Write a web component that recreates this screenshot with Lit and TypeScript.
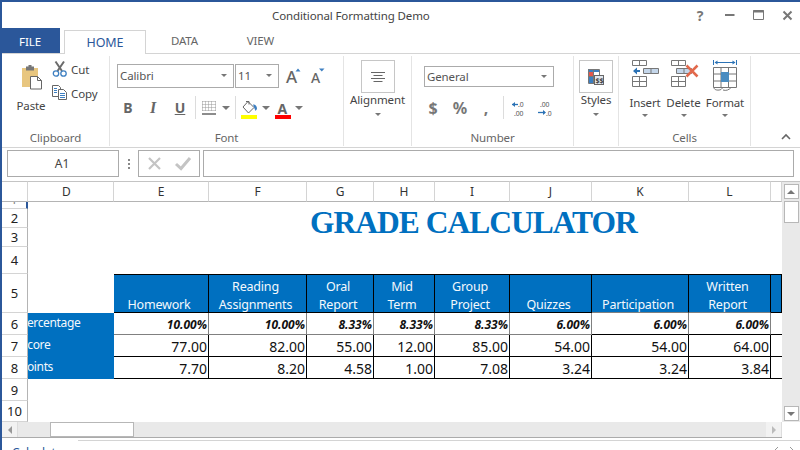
import { LitElement, html, css } from "lit";
import { customElement } from "lit/decorators.js";

const COLS = ["D", "E", "F", "G", "H", "I", "J", "K", "L", ""];
const HEADS = [
  ["Homework"], ["Reading", "Assignments"], ["Oral", "Report"], ["Mid", "Term"],
  ["Group", "Project"], ["Quizzes"], ["Participation"], ["Written", "Report"], [""],
];
const ROWS = [
  { label: "Percentage", cls: "pct", vals: ["10.00%", "10.00%", "8.33%", "8.33%", "8.33%", "6.00%", "6.00%", "6.00%", ""] },
  { label: "Score", cls: "num", vals: ["77.00", "82.00", "55.00", "12.00", "85.00", "54.00", "54.00", "64.00", ""] },
  { label: "Points", cls: "num", vals: ["7.70", "8.20", "4.58", "1.00", "7.08", "3.24", "3.24", "3.84", ""] },
];

const pasteIcon = html`<svg width="30" height="25" viewBox="0 0 30 25">
  <rect x="5" y="3" width="16" height="19" fill="#e8c67f"/>
  <rect x="9" y="1.5" width="8" height="4" fill="#777"/><rect x="11.5" y="0" width="3" height="2" fill="#777"/>
  <path d="M13.5 11.5h7l4 4v8.500h-11z" fill="#fff" stroke="#666"/><path d="M20.500 11.500v4h4" fill="none" stroke="#666"/>
</svg>`;
const cutIcon = html`<svg width="16" height="16" viewBox="0 0 16 16">
  <path d="M3.500 0.500 L10 10 M12 0.500 L5.500 10" stroke="#6b6b6b" stroke-width="2" fill="none"/>
  <circle cx="4" cy="12.500" r="2.700" fill="none" stroke="#3d7fc1" stroke-width="1.300"/>
  <circle cx="11.500" cy="12.500" r="2.700" fill="none" stroke="#3d7fc1" stroke-width="1.300"/>
</svg>`;
const copyIcon = html`<svg width="16" height="15" viewBox="0 0 16 15">
  <path d="M0.500 0.500h6l2 2v9h-8z" fill="#fff" stroke="#666"/>
  <path d="M6.500 4.500h5l3 3v7h-8z" fill="#fff" stroke="#666"/>
  <path d="M2 3.500h3M2 5.500h3M2 7.500h3M8 8.500h5M8 10.500h5M8 12.500h5" stroke="#3d7fc1"/>
</svg>`;
const growIcon = html`<svg width="14" height="16" viewBox="0 0 14 16">
  <text x="0" y="15" class="svgA" font-size="17">A</text><path d="M9.500 3.500l2.500-3 2.500 3z" fill="#3d7fc1"/>
</svg>`;
const shrinkIcon = html`<svg width="14" height="16" viewBox="0 0 14 16">
  <text x="0" y="15" class="svgA" font-size="14">A</text><path d="M8 0.500h5.500l-2.700 3z" fill="#3d7fc1"/>
</svg>`;
const borderIcon = html`<svg width="14" height="14" viewBox="0 0 14 14">
  <path d="M0.500 0.500h13M0.500 3.500h13M0.500 6.500h13M0.500 9.500h13M0.500 0.500v10M3.500 0.500v10M6.500 0.500v10M9.500 0.500v10M13.500 0.500v10" stroke="#999" stroke-dasharray="1 1" fill="none"/>
  <path d="M0 13h14" stroke="#666" stroke-width="1.500"/>
</svg>`;
const fillIcon = html`<svg width="17" height="18" viewBox="0 0 17 18">
  <path d="M7 0.500 L2 6 L7.500 12 L13 6.500 Z" fill="#fff" stroke="#666"/><path d="M5 0.500h3v3" fill="none" stroke="#666"/>
  <path d="M12 3.500c2.500 0 4 2 4 4.500l-1.500 2-1-2.500z" fill="#3d7fc1"/>
  <rect x="0" y="14" width="16" height="4" fill="#ffff00"/>
</svg>`;
const fontColorIcon = html`<svg width="16" height="18" viewBox="0 0 16 18">
  <text x="2.500" y="13" class="svgAB" font-size="14">A</text><rect x="0" y="14" width="16" height="4" fill="#f00"/>
</svg>`;
const alignIcon = html`<svg width="14" height="10" viewBox="0 0 14 10">
  <path d="M0 0.500h14M2.500 3.500h9M0 6.500h14M2.500 9.500h9" stroke="#666"/>
</svg>`;
const stylesIcon = html`<svg width="16" height="16" viewBox="0 0 16 16">
  <rect x="0" y="0" width="11" height="3" fill="#3d7fc1"/><rect x="0" y="3" width="5" height="4" fill="#e2574c"/>
  <path d="M0.500 0.500h11v14h-11zM0.500 7.500h11M0.500 11h5M5.500 0.500v14" fill="none" stroke="#777"/>
  <rect x="1" y="8" width="4" height="6" fill="#3d7fc1"/>
  <rect x="6.500" y="6.500" width="9" height="9" fill="#dfe6ee" stroke="#666"/>
  <text x="7.500" y="14" font-size="7" font-weight="700" font-family="'Noto Sans',sans-serif" fill="#444">$$</text>
</svg>`;
const insertIcon = html`<svg width="27" height="27" viewBox="0 0 27 27">
  <path d="M0.500 0.500h14v5h-14zM7.500 0.500v5" fill="#fff" stroke="#777"/>
  <path d="M11.500 8.500h15v5h-15zM19 8.500v5" fill="#c4d6ea" stroke="#777"/>
  <path d="M1 11l4-3.500v2.500h3v2h-3v2.500z" fill="#2b72b5"/>
  <path d="M0.500 16.500h14v10h-14zM0.500 21.500h14M7.500 16.500v10" fill="#fff" stroke="#777"/>
</svg>`;
const deleteIcon = html`<svg width="29" height="27" viewBox="0 0 29 27">
  <path d="M0.500 0.500h14v5h-14zM7.500 0.500v5" fill="#fff" stroke="#777"/>
  <path d="M5.500 8.500h15v5h-15zM13 8.500v5" fill="#c4d6ea" stroke="#777"/>
  <path d="M0.500 16.500h14v10h-14zM0.500 21.500h14M7.500 16.500v10" fill="#fff" stroke="#777"/>
  <path d="M15.500 5.500l11 11M26.500 5.500l-11 11" stroke="#e2694c" stroke-width="2.500"/>
</svg>`;
const formatIcon = html`<svg width="24" height="31" viewBox="0 0 24 31">
  <path d="M0.500 0v5M23.500 0v5M2 2.500h20" stroke="#2b72b5" fill="none"/><path d="M1.500 2.500l3-2v4zM22.500 2.500l-3-2v4z" fill="#2b72b5"/>
  <path d="M0.500 7.500h23v20h-23zM0.500 14h23M0.500 21h23M8 7.500v20M15.500 7.500v20" fill="#fff" stroke="#777"/>
  <rect x="8" y="12" width="8" height="10" fill="#4a8cc0"/>
  <path d="M1 27.500c0 3 5 3 7 2l2-2M10 30c3 1 6 0 8-2.500" fill="none" stroke="#777"/>
</svg>`;
const decLeft = html`<svg width="16" height="16" viewBox="0 0 16 16">
  <text x="6" y="7" class="svgN">.0</text><text x="2" y="15.600" class="svgN">.00</text>
  <path d="M0 4.500h6" stroke="#2b72b5" stroke-width="1.300"/><path d="M0 4.500l3-2.500v5z" fill="#2b72b5"/>
</svg>`;
const decRight = html`<svg width="16" height="16" viewBox="0 0 16 16">
  <text x="2" y="7" class="svgN">.00</text><text x="8" y="15.600" class="svgN">.0</text>
  <path d="M0 12.500h7" stroke="#2b72b5" stroke-width="1.300"/><path d="M8 12.500l-3-2.500v5z" fill="#2b72b5"/>
</svg>`;

@customElement("app-root")
export class AppRoot extends LitElement {
  static styles = css`
    :host { display: block; width: 800px; height: 450px; overflow: hidden; background: #fff; box-sizing: border-box;
      border-top: 2px solid #2b579a; border-left: 2px solid #2b579a; font-family: "Noto Sans", sans-serif; color: #444; font-size: 11.500px; letter-spacing: -0.12px; }
    svg { display: block; flex: none; overflow: visible; }
    .svgA { font-family: "Noto Sans", sans-serif; fill: #666; font-weight: 500; }
    .svgAB { font-family: "Noto Sans", sans-serif; fill: #666; font-weight: 700; }
    .svgN { font-family: "Noto Sans", sans-serif; fill: #555; font-size: 6.800px; }
    .caret { width: 0; height: 0; border-left: 4px solid transparent; border-right: 4px solid transparent; border-top: 4px solid #777; flex: none; }
    .caret.sm { border-left-width: 3px; border-right-width: 3px; border-top-width: 3px; }

    .titlebar { height: 26px; display: flex; align-items: center; }
    .title { margin-left: 270px; color: #444; }
    .winctl { margin-left: auto; display: flex; align-items: center; }
    .help { width: 16px; text-align: center; font-weight: 700; font-size: 14px; color: #777; margin-right: 17px; }
    .wm { margin-right: 18px; }
    .wx { margin-right: 19px; }
    .wc { margin-right: 8px; }

    .tabs { height: 26px; display: flex; box-sizing: border-box; border-bottom: 1px solid #d4d4d4; margin-left: -2px; }
    .tab { display: flex; align-items: center; justify-content: center; color: #666; height: 25px; padding-bottom: 1px; box-sizing: border-box; }
    .file { width: 60px; background: #2b579a; color: #fff; padding: 2px 0 0; }
    .home { width: 82px; margin-left: 4px; margin-top: 2px; padding: 0; border: 1px solid #d4d4d4; border-bottom: 0; background: #fff; color: #2b579a; font-size: 12.500px; height: 24px; z-index: 1; }
    .data { width: 77px; }
    .view { width: 75px; }

    .ribbon { height: 94px; box-sizing: border-box; border-bottom: 1px solid #d4d4d4; display: flex; padding-top: 2px; }
    .group { height: 90px; display: flex; flex-direction: column; box-sizing: border-box; border-right: 1px solid #e4e4e4; flex: none; }
    .body { flex: 1; display: flex; min-height: 0; }
    .glabel { height: 18px; line-height: 19px; text-align: center; color: #666; }
    .g-clip { width: 108px; }
    .g-font { width: 234px; }
    .g-align { width: 68px; }
    .g-num { width: 162px; }
    .g-styles { width: 45px; }
    .g-cells { width: 132px; }

    .paste { width: 36px; margin-left: 12px; display: flex; flex-direction: column; align-items: center; padding-top: 9px; color: #444; }
    .paste .t { margin-top: 8px; line-height: 16px; padding-right: 2px; }
    .small { margin-left: 2px; display: flex; flex-direction: column; padding-top: 5px; gap: 9px; }
    .srow { display: flex; align-items: center; gap: 3px; line-height: 16px; height: 15px; }
    .srow span { margin-top: 3px; }

    .fbody { display: flex; flex-direction: column; padding: 8px 0 0 7px; }
    .frow { display: flex; align-items: center; }
    .combo { height: 24px; box-sizing: border-box; border: 1px solid #ababab; display: flex; align-items: center; padding: 0 6px 1px 2px; justify-content: space-between; color: #555; background: #fff; }
    .c-name { width: 117px; }
    .c-size { width: 44px; margin-left: 1px; }
    .grow { margin-left: 7px; }
    .shrink { margin-left: 11px; }
    .frow2 { height: 23px; margin-top: 8px; }
    .ft { width: 26px; text-align: center; font-size: 14px; color: #666; font-weight: 700; letter-spacing: 0; }
    .ft.b { margin-left: -2px; }
    .ft.i { font-style: italic; font-family: "Liberation Serif", serif; font-size: 16px; margin-left: -1px; margin-right: 1px; }
    .ft.u { text-decoration: underline; }
    .sep { width: 1px; height: 23px; background: #dcdcdc; flex: none; }
    .s1 { margin-left: 2px; } .s2 { margin-left: 6px; } .s3 { margin-left: 5px; } .s4 { margin-left: 5px; margin-top: 4px; } .s5 { margin-left: 4px; }

    .bigcol { flex: 1; display: flex; flex-direction: column; align-items: center; padding-top: 4px; }
    .bigbtn { width: 34px; height: 33px; box-sizing: border-box; border: 1px solid #c6c6c6; display: flex; align-items: center; justify-content: center; }
    .bigcol .t { line-height: 14px; padding-bottom: 2px; color: #444; }
    .bigcol .caret { margin-top: 4px; }

    .nbody { display: flex; flex-direction: column; padding: 10px 0 0 12px; }
    .c-num { width: 130px; height: 21px; padding-left: 2px; }
    .nrow { height: 23px; margin-top: 9px; display: flex; align-items: center; }
    .nb { font-size: 16px; color: #777; font-weight: 700; text-align: center; letter-spacing: 0; }
    .n1 { width: 18px; } .n2 { width: 20px; margin-left: 8px; } .n3 { width: 12px; margin-left: 10px; }
    .n4 { margin-left: 11px; } .n5 { margin-left: 8px; } .n6 { margin-left: 10px; }

    .cellcol { display: flex; flex-direction: column; align-items: center; padding-top: 4px; }
    .iconbox { height: 32px; display: flex; align-items: flex-start; }
    .cellcol .t { line-height: 16px; margin-top: 3px; color: #444; }
    .cellcol .caret { margin-top: 3px; }
    .cbody { padding-left: 7px; }
    .cc1 { width: 38px; } .cc2 { width: 39px; } .cc3 { width: 44px; }
    .cc2 .iconbox { margin-left: 3px; }
    .cc3 .iconbox { margin-right: 1px; }
    .collapse { margin: 78px 0 0 30px; }

    .fx { display: flex; align-items: center; height: 27px; padding: 2px 0 0 5px; margin-bottom: 4px; }
    .fbox { height: 27px; box-sizing: border-box; border: 1px solid #ababab; display: flex; align-items: center; justify-content: center; color: #444; }
    .namebox { width: 112px; font-size: 12px; padding-right: 2px; }
    .grip { width: 19px; display: flex; justify-content: center; }
    .cancelbox { width: 62px; gap: 14px; }
    .input { width: 591px; margin-left: 3px; }

    .sheet { display: flex; letter-spacing: 0; }
    .grid { width: 780px; display: grid; grid-template-columns: 26px 86px 95px 98px 67px 61px 75px 82px 97px 82px 11px;
      grid-template-rows: 21px 7px 19px 19px 27px 39px 22px 22px 22px 22px 21px; color: #000; overflow: hidden; }
    .ch { border-top: 1px solid #c4c4c4; border-bottom: 1px solid #b4b4b4; border-right: 1px solid #d4d4d4; box-sizing: border-box; display: flex; align-items: center; justify-content: center; font-size: 12px; color: #333; }
    .ch.d { padding-right: 8px; }
    .rh { border-right: 1px solid #b4b4b4; border-bottom: 1px solid #d4d4d4; box-sizing: border-box; display: flex; align-items: center; justify-content: center; font-size: 13px; color: #222; overflow: hidden; grid-column: 1; }
    .rh.one { align-items: flex-start; line-height: 14px; border-right: 2px solid #2b579a; color: #888; }
    .rh.one span { margin-top: -10px; display: block; }
    .r2 { grid-row: 3; } .r3 { grid-row: 4; } .r4 { grid-row: 5; }
    .titlecell { grid-column: 2 / -1; grid-row: 2 / span 3; display: flex; align-items: center; padding: 0 0 4px 282px;
      font-family: "Liberation Serif", serif; font-weight: 700; font-size: 31.500px; letter-spacing: -1px; color: #0070c0; white-space: nowrap; }
    .empty4 { grid-column: 2 / -1; grid-row: 5; }
    .fill { grid-column: 2 / -1; }
    .hd { background: #0070c0; color: #f4f8fc; font-size: 12.500px; letter-spacing: -0.2px; box-sizing: border-box; border-top: 1px solid #000; border-right: 1px solid #000; border-bottom: 1px solid #000;
      display: flex; flex-direction: column; justify-content: flex-end; align-items: center; text-align: center; padding-right: 4px; }
    .hd > div { height: 18px; line-height: 22px; }
    .hd.g { border-bottom-color: #808080; }
    .lab { background: #0070c0; color: #f4f8fc; font-size: 12px; letter-spacing: -0.35px; line-height: 20px; overflow: hidden; white-space: nowrap; }
    .lab span { display: block; margin-left: -8px; }
    .lab.s span { margin-left: -7px; }
    .c { box-sizing: border-box; display: flex; align-items: center; justify-content: flex-end; padding: 1px 1px 0 0; border-right: 1px solid #000; border-bottom: 1px solid #000; white-space: nowrap; overflow: hidden; color: #111; }
    .c.pct { font-size: 12px; font-weight: 700; font-style: italic; border-right-color: #808080; border-bottom-color: #808080; }
    .c.pct.k { border-bottom-color: #000; }
    .c.num { font-size: 14px; }
    .c.last { border-right: 0; }

    .vs { width: 18px; background: #e9e9e9; display: flex; flex-direction: column; align-items: center; box-sizing: border-box; height: 241px; padding: 2px 0 1px; border-top: 1px solid #c4c4c4; }
    .sb { background: #fff; border: 1px solid #b7b7b7; box-sizing: border-box; flex: none; display: flex; align-items: center; justify-content: center; }
    .vbtn { width: 15px; height: 15px; }
    .vthumb { width: 15px; height: 22px; margin-top: 2px; }
    .vsp { flex: 1; }
    .up { width: 0; height: 0; border-left: 4px solid transparent; border-right: 4px solid transparent; border-bottom: 4px solid #777; }
    .down { width: 0; height: 0; border-left: 4px solid transparent; border-right: 4px solid transparent; border-top: 4px solid #777; }
    .left { width: 0; height: 0; border-top: 4px solid transparent; border-bottom: 4px solid transparent; border-right: 4px solid #999; }
    .right { width: 0; height: 0; border-top: 4px solid transparent; border-bottom: 4px solid transparent; border-left: 4px solid #bbb; }
    .hs { width: 780px; height: 16px; box-sizing: border-box; background: #e9e9e9; border-bottom: 1px solid #ababab; display: flex; align-items: center; }
    .hbtn { width: 16px; height: 15px; border: 0; background: #f2f2f2; border-right: 1px solid #ddd; }
    .hthumb { width: 84px; height: 15px; margin-left: 32px; }
    .hsp { flex: 1; }
    .status { display: flex; position: relative; height: 12px; overflow: hidden; }
    .calc { margin: 8px 0 0 10px; color: #2b579a; font-size: 12px; line-height: 14px; }
    .statusline { position: absolute; left: 76px; right: 0; top: 2px; height: 1px; background: #d4d4d4; }
    .nav { margin: 9px 7px 0 auto; }
  `;

  render() {
    return html`
      <div class="titlebar">
        <div class="title">Conditional Formatting Demo</div>
        <div class="winctl">
          <div class="help">?</div>
          <svg class="wm" width="10" height="10" viewBox="0 0 10 10"><path d="M0 5h9.500" stroke="#777" stroke-width="2"/></svg>
          <svg class="wx" width="11" height="10" viewBox="0 0 11 10"><path d="M0.500 0.500h10v9h-10z" fill="none" stroke="#777"/><path d="M0 1.500h11" stroke="#777" stroke-width="2"/></svg>
          <svg class="wc" width="9" height="9" viewBox="0 0 9 9"><path d="M0.500 0.500l8 8M8.500 0.500l-8 8" stroke="#777" stroke-width="2"/></svg>
        </div>
      </div>
      <div class="tabs">
        <div class="tab file">FILE</div>
        <div class="tab home">HOME</div>
        <div class="tab data">DATA</div>
        <div class="tab view">VIEW</div>
      </div>
      <div class="ribbon">
        <div class="group g-clip">
          <div class="body">
            <div class="paste">${pasteIcon}<div class="t">Paste</div></div>
            <div class="small">
              <div class="srow">${cutIcon}<span>Cut</span></div>
              <div class="srow">${copyIcon}<span>Copy</span></div>
            </div>
          </div>
          <div class="glabel">Clipboard</div>
        </div>
        <div class="group g-font">
          <div class="body fbody">
            <div class="frow">
              <div class="combo c-name"><span>Calibri</span><div class="caret sm"></div></div>
              <div class="combo c-size"><span>11</span><div class="caret sm"></div></div>
              <div class="grow">${growIcon}</div>
              <div class="shrink">${shrinkIcon}</div>
            </div>
            <div class="frow frow2">
              <div class="ft b">B</div><div class="ft i">I</div><div class="ft u">U</div>
              <div class="sep s1"></div>
              <div class="s2">${borderIcon}</div>
              <div class="caret s2"></div>
              <div class="sep s3"></div>
              <div class="s4">${fillIcon}</div>
              <div class="caret s5"></div>
              <div class="s4">${fontColorIcon}</div>
              <div class="caret s5"></div>
            </div>
          </div>
          <div class="glabel">Font</div>
        </div>
        <div class="group g-align">
          <div class="body"><div class="bigcol"><div class="bigbtn">${alignIcon}</div><div class="t">Alignment</div><div class="caret sm"></div></div></div>
        </div>
        <div class="group g-num">
          <div class="body nbody">
            <div class="combo c-num"><span>General</span><div class="caret sm"></div></div>
            <div class="nrow">
              <div class="nb n1">$</div>
              <div class="nb n2">%</div>
              <div class="nb n3">,</div>
              <div class="sep n4"></div>
              <div class="n5">${decLeft}</div>
              <div class="n6">${decRight}</div>
            </div>
          </div>
          <div class="glabel">Number</div>
        </div>
        <div class="group g-styles">
          <div class="body"><div class="bigcol"><div class="bigbtn">${stylesIcon}</div><div class="t">Styles</div><div class="caret sm"></div></div></div>
        </div>
        <div class="group g-cells">
          <div class="body cbody">
            <div class="cellcol cc1"><div class="iconbox">${insertIcon}</div><div class="t">Insert</div><div class="caret sm"></div></div>
            <div class="cellcol cc2"><div class="iconbox">${deleteIcon}</div><div class="t">Delete</div><div class="caret sm"></div></div>
            <div class="cellcol cc3"><div class="iconbox">${formatIcon}</div><div class="t">Format</div><div class="caret sm"></div></div>
          </div>
          <div class="glabel">Cells</div>
        </div>
        <div class="collapse">
          <svg width="10" height="6" viewBox="0 0 10 6"><path d="M1 5l4-4 4 4" fill="none" stroke="#666" stroke-width="1.600"/></svg>
        </div>
      </div>
      <div class="fx">
        <div class="fbox namebox">A1</div>
        <div class="grip"><svg width="2" height="10" viewBox="0 0 2 10"><path d="M0 0h2v2h-2zM0 4h2v2h-2zM0 8h2v2h-2z" fill="#888"/></svg></div>
        <div class="fbox cancelbox">
          <svg width="13" height="13" viewBox="0 0 13 13"><path d="M1 1l11 11M12 1l-11 11" stroke="#c4c4c4" stroke-width="2.200"/></svg>
          <svg width="16" height="13" viewBox="0 0 16 13"><path d="M1 7l5 4.500 9-10.500" fill="none" stroke="#c4c4c4" stroke-width="3"/></svg>
        </div>
        <div class="fbox input"></div>
      </div>
      <div class="sheet">
        <div class="grid">
          <div class="ch"></div>
          ${COLS.map((c, i) => html`<div class="ch ${i === 0 ? "d" : ""}">${c}</div>`)}
          <div class="rh one"><span>1</span></div>
          <div class="titlecell">GRADE CALCULATOR</div>
          <div class="rh r2">2</div>
          <div class="rh r3">3</div>
          <div class="rh r4">4</div>
          <div class="empty4"></div>
          <div class="rh">5</div>
          <div></div>
          ${HEADS.map((h, i) => html`<div class="hd ${i >= 6 && i < 8 ? "g" : ""}">${h.map((l) => html`<div>${l}</div>`)}</div>`)}
          ${ROWS.map((r, ri) => html`
            <div class="rh">${6 + ri}</div>
            <div class="lab ${ri === 1 ? "s" : ""}"><span>${r.label}</span></div>
            ${r.vals.map((v, i) => html`<div class="c ${r.cls} ${i >= 6 ? "k" : ""} ${i === 8 ? "last" : ""}">${v}</div>`)}
          `)}
          <div class="rh">9</div><div class="fill"></div>
          <div class="rh">10</div><div class="fill"></div>
        </div>
        <div class="vs">
          <div class="sb vbtn"><div class="up"></div></div>
          <div class="sb vthumb"></div>
          <div class="vsp"></div>
          <div class="sb vbtn"><div class="down"></div></div>
        </div>
      </div>
      <div class="hs">
        <div class="sb hbtn"><div class="left"></div></div>
        <div class="sb hthumb"></div>
        <div class="hsp"></div>
        <div class="sb hbtn"><div class="right"></div></div>
      </div>
      <div class="status">
        <div class="statusline"></div>
        <div class="calc">Calculate</div>
        <svg class="nav" width="18" height="4" viewBox="0 0 18 4"><path d="M3 0l-3 3M15 0l3 3" fill="none" stroke="#999"/></svg>
      </div>
    `;
  }
}
